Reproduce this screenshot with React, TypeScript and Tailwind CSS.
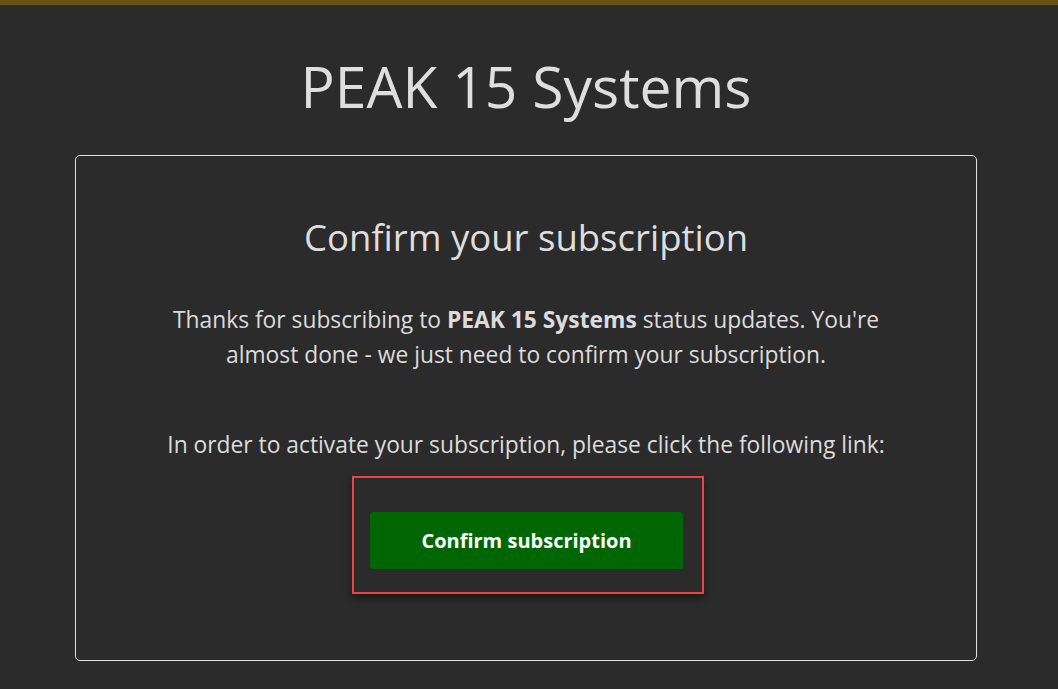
export default function App() {
  return (
    <div
      className="min-h-[689px] bg-[#2b2b2b] text-[#dddddd]"
      style={{ fontFamily: '"Open Sans", "Noto Sans", sans-serif' }}
    >
      <div className="h-[5px] bg-[#695312]" />
      <div className="pr-[6px]">
        <h1 className="mt-[41px] text-center text-[57px] leading-[80px] font-normal text-[#dedede]">
          PEAK 15 Systems
        </h1>
        <div className="mx-auto mt-[29px] w-[902px] h-[506px] rounded-[5px] border border-[#e0e0e0] flex flex-col items-center">
          <h2 className="mt-[55px] text-[36.5px] leading-[52px] text-[#dedede]">Confirm your subscription</h2>
          <p className="mt-[39px] w-[760px] text-center text-[22.8px] leading-[35px] text-[#dcdcdc]">
            Thanks for subscribing to <b className="font-bold">PEAK 15 Systems</b> status updates. You're
            <br />
            almost done - we just need to confirm your subscription.
          </p>
          <p className="mt-[55px] text-center text-[22.8px] leading-[35px] text-[#dcdcdc]">
            In order to activate your subscription, please click the following link:
          </p>
          <div className="mt-[14px] ml-[4px] w-[352px] h-[118px] border-2 border-[#ec4444] shadow-[0_4px_8px_rgba(0,0,0,0.45)] pt-[34px] pl-[16px]">
            <button className="w-[313px] h-[57px] rounded-[3px] bg-[#006602] text-white font-bold text-[20px]">
              Confirm subscription
            </button>
          </div>
        </div>
      </div>
    </div>
  );
}
